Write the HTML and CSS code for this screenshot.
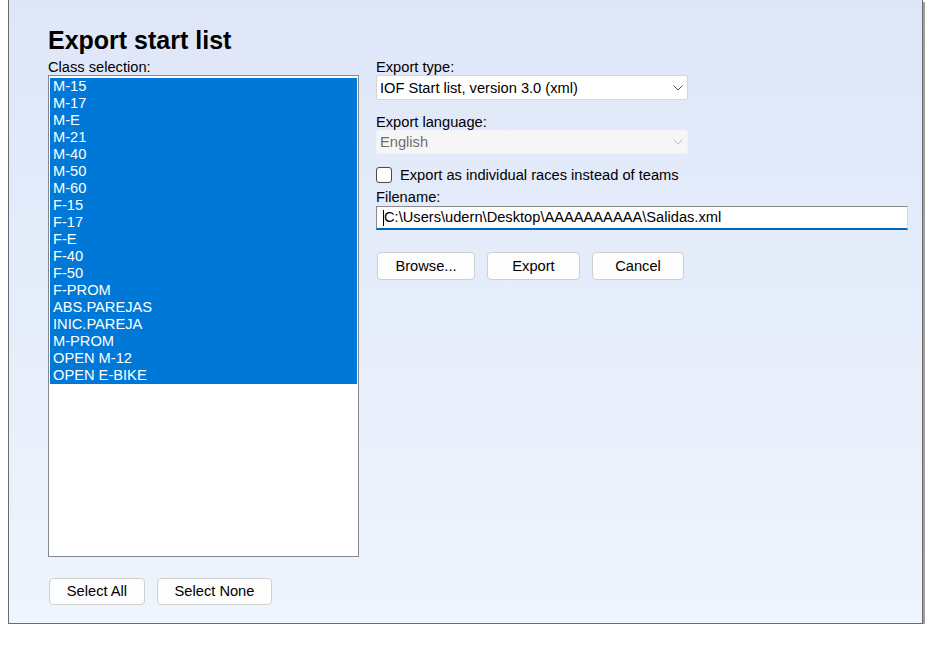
FILE: index.html
```html
<!DOCTYPE html>
<html>
<head>
<meta charset="utf-8">
<link rel="stylesheet" href="styles.css">
</head>
<body>
<div class="panel">
  <h1 class="title">Export start list</h1>
  <div class="columns">
    <div class="left">
      <div class="label">Class selection:</div>
      <div class="listbox">
        <div class="item sel">M-15</div>
        <div class="item sel">M-17</div>
        <div class="item sel">M-E</div>
        <div class="item sel">M-21</div>
        <div class="item sel">M-40</div>
        <div class="item sel">M-50</div>
        <div class="item sel">M-60</div>
        <div class="item sel">F-15</div>
        <div class="item sel">F-17</div>
        <div class="item sel">F-E</div>
        <div class="item sel">F-40</div>
        <div class="item sel">F-50</div>
        <div class="item sel">F-PROM</div>
        <div class="item sel">ABS.PAREJAS</div>
        <div class="item sel">INIC.PAREJA</div>
        <div class="item sel">M-PROM</div>
        <div class="item sel">OPEN M-12</div>
        <div class="item sel">OPEN E-BIKE</div>
      </div>
      <div class="btnrow">
        <div class="btn w-all">Select All</div>
        <div class="btn w-none">Select None</div>
      </div>
    </div>
    <div class="right">
      <div class="label">Export type:</div>
      <div class="select">
        <span>IOF Start list, version 3.0 (xml)</span>
        <svg class="chev" width="10" height="6" viewBox="0 0 10 6"><path d="M0.5 0.5 L5 5 L9.5 0.5" fill="none" stroke="#555" stroke-width="1"/></svg>
      </div>
      <div class="label lang">Export language:</div>
      <div class="select disabled">
        <span>English</span>
        <svg class="chev" width="10" height="6" viewBox="0 0 10 6"><path d="M0.5 0.5 L5 5 L9.5 0.5" fill="none" stroke="#bbb" stroke-width="1"/></svg>
      </div>
      <div class="check">
        <span class="box"></span>
        <span>Export as individual races instead of teams</span>
      </div>
      <div class="label fname">Filename:</div>
      <div class="input"><span class="caret"></span>C:\Users\udern\Desktop\AAAAAAAAAA\Salidas.xml</div>
      <div class="btnrow actions">
        <div class="btn w-browse">Browse...</div>
        <div class="btn w-export">Export</div>
        <div class="btn w-cancel">Cancel</div>
      </div>
    </div>
  </div>
</div>
</body>
</html>
```
FILE: styles.css
```css
html, body {
  margin: 0;
  padding: 0;
  background: #ffffff;
  font-family: "Liberation Sans", Arial, sans-serif;
  font-size: 14.67px;
  color: #000;
}
.panel {
  margin-left: 8px;
  width: 915px;
  height: 624px;
  box-sizing: border-box;
  border-left: 1px solid #6b6b6b;
  border-right: 1px solid #6b6b6b;
  border-bottom: 1px solid #6b6b6b;
  box-shadow: 2px 2px 0 #a0a0a0;
  background: linear-gradient(to bottom, #dfe6f8 0%, #e6edfa 50%, #eff5fd 100%);
  padding: 25px 0 0 39px;
}
.title {
  margin: 0;
  font-size: 25px;
  font-weight: bold;
  line-height: 30px;
  height: 30px;
}
.columns {
  display: flex;
  gap: 17px;
}
.left {
  width: 311px;
  display: flex;
  flex-direction: column;
}
.right {
  width: 531px;
  display: flex;
  flex-direction: column;
}
.label {
  line-height: 16px;
  height: 16px;
  margin-top: 4px;
  margin-bottom: 0;
}
.listbox {
  box-sizing: border-box;
  height: 482px;
  border: 1px solid #828790;
  padding: 2px 1px 1px 1px;
  background: #fff;
}
.item {
  height: 17px;
  line-height: 17px;
  padding-left: 3px;
}
.item.sel {
  background: #0078d7;
  color: #fff;
}
.btnrow {
  display: flex;
  gap: 12px;
}
.left .btnrow {
  margin-top: 21px;
  padding-left: 1px;
}
.btn {
  box-sizing: border-box;
  height: 27px;
  line-height: 25px;
  border: 1px solid #d0d0d0;
  border-radius: 4px;
  background: #fdfdfd;
  text-align: center;
}
.w-all { width: 96px; }
.w-none { width: 115px; }
.w-browse { width: 98px; }
.w-export { width: 93px; }
.w-cancel { width: 92px; }
.select {
  box-sizing: border-box;
  width: 312px;
  height: 25px;
  border: 1px solid #d5d5d5;
  border-radius: 2px;
  background: #fff;
  display: flex;
  align-items: center;
  justify-content: space-between;
  padding: 0 4px 0 3px;
}
.select.disabled {
  background: #f6f6f7;
  border-color: #f2f2f3;
  color: #6d6d6d;
  height: 24px;
}
.lang { margin-top: 14px; }
.check {
  display: flex;
  align-items: center;
  gap: 8px;
  margin-top: 12px;
  height: 18px;
}
.box {
  box-sizing: border-box;
  width: 16px;
  height: 16px;
  border: 1px solid #4a4a4a;
  border-radius: 3px;
  background: #fff;
}
.fname { margin-top: 5px; margin-bottom: 1px; }
.input {
  box-sizing: border-box;
  width: 532px;
  height: 24px;
  background: #fff;
  border-top: 1px solid #8a8a8a;
  border-left: 1px solid #8a8a8a;
  border-right: 1px solid #d9d9d9;
  border-bottom: 2px solid #0067c0;
  padding-left: 7px;
  line-height: 21px;
  position: relative;
}
.caret {
  position: absolute;
  left: 6px;
  top: 3px;
  width: 1px;
  height: 16px;
  background: #000;
}
.actions {
  margin-top: 22px;
  padding-left: 1px;
}
.actions .btn { height: 28px; line-height: 26px; }
```
